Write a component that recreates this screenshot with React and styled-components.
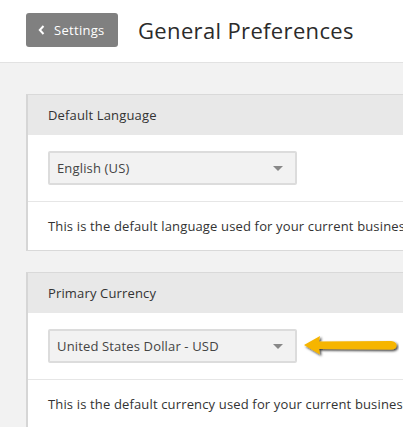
import React from "react";
import styled, { createGlobalStyle } from "styled-components";

const Global = createGlobalStyle`
  html, body { margin: 0; padding: 0; background: #f2f2f2; overflow: hidden; }
  body { font-family: "Open Sans", "Liberation Sans", sans-serif; color: #333; }
`;

const Page = styled.div`
  width: 403px;
  height: 427px;
  overflow: hidden;
  background: #f2f2f2;
`;

const Header = styled.header`
  height: 62px;
  background: #fff;
  border-bottom: 1px solid #e2e2e2;
  display: flex;
  align-items: center;
  padding-left: 26px;
  gap: 20px;
`;

const BackButton = styled.button`
  width: 92px;
  height: 34px;
  background: #808080;
  border: none;
  border-radius: 3px;
  color: #fff;
  font-family: "Open Sans", "Liberation Sans", sans-serif;
  font-size: 13px;
  letter-spacing: 0.3px;
  display: flex;
  align-items: center;
  padding: 0 0 0 12px;
  gap: 9px;
  margin-top: -2px;
`;

const Title = styled.h1`
  margin: 0;
  font-family: "Open Sans", "Liberation Sans", sans-serif;
  font-weight: 400;
  font-size: 22px;
  letter-spacing: 0.35px;
  color: #2b2b2b;
  margin-top: -3px;
`;

const Main = styled.main`
  padding: 31px 0 0 26px;
  display: flex;
  flex-direction: column;
  gap: 21px;
`;

const Card = styled.section`
  width: 430px;
  background: #fff;
  border: 1px solid #d9d9d9;
  border-left: 2px solid #d6d6d6;
  box-sizing: border-box;
`;

const CardHeader = styled.div`
  height: 40px;
  background: #e8e8e8;
  display: flex;
  align-items: center;
  padding-left: 20px;
  font-size: 13px;
  letter-spacing: 0.15px;
  color: #333;
`;

const CardBody = styled.div`
  padding: 16px 20px;
  display: flex;
  align-items: center;
  gap: 6px;
`;

const Select = styled.div`
  width: 249px;
  height: 34px;
  box-sizing: border-box;
  background: #f2f2f2;
  border: 2px solid #dcdcdc;
  border-radius: 2px;
  display: flex;
  align-items: center;
  justify-content: space-between;
  padding: 0 12px 0 7px;
  font-size: 13px;
  letter-spacing: 0.15px;
  color: #444;
`;

const Caret = styled.span`
  width: 0;
  height: 0;
  border-left: 5px solid transparent;
  border-right: 5px solid transparent;
  border-top: 5px solid #888;
`;

const Description = styled.div`
  border-top: 1px solid #e6e6e6;
  height: 48px;
  display: flex;
  align-items: center;
  padding-left: 20px;
  font-size: 13px;
  letter-spacing: 0.15px;
  color: #333;
  white-space: nowrap;
`;

const Chevron = () => (
  <svg width="7" height="10" viewBox="0 0 7 10">
    <path d="M5.5 1 L1.8 5 L5.5 9" fill="none" stroke="#fff" strokeWidth="2" />
  </svg>
);

const Arrow = () => (
  <svg width="96" height="24" viewBox="0 0 96 24" style={{ marginTop: 2 }}>
    <defs>
      <filter id="sh" x="-10%" y="-30%" width="130%" height="180%">
        <feDropShadow dx="1.5" dy="1.5" stdDeviation="0.8" floodColor="#000" floodOpacity="0.8" />
      </filter>
    </defs>
    <path
      d="M1 10 L17 1 L16 6.5 L88 6 Q93.5 6.5 93.5 10.5 Q93.5 14.5 88 14.5 L16 14 L17 19.5 Z"
      fill="#f6b500"
      filter="url(#sh)"
    />
  </svg>
);

const sections = [
  {
    title: "Default Language",
    value: "English (US)",
    text: "This is the default language used for your current business",
  },
  {
    title: "Primary Currency",
    value: "United States Dollar - USD",
    text: "This is the default currency used for your current business",
    arrow: true,
  },
];

export default function App() {
  return (
    <Page>
      <Global />
      <Header>
        <BackButton>
          <Chevron />
          Settings
        </BackButton>
        <Title>General Preferences</Title>
      </Header>
      <Main>
        {sections.map((s) => (
          <Card key={s.title}>
            <CardHeader>{s.title}</CardHeader>
            <CardBody>
              <Select>
                <span>{s.value}</span>
                <Caret />
              </Select>
              {s.arrow && <Arrow />}
            </CardBody>
            <Description>{s.text}</Description>
          </Card>
        ))}
      </Main>
    </Page>
  );
}
